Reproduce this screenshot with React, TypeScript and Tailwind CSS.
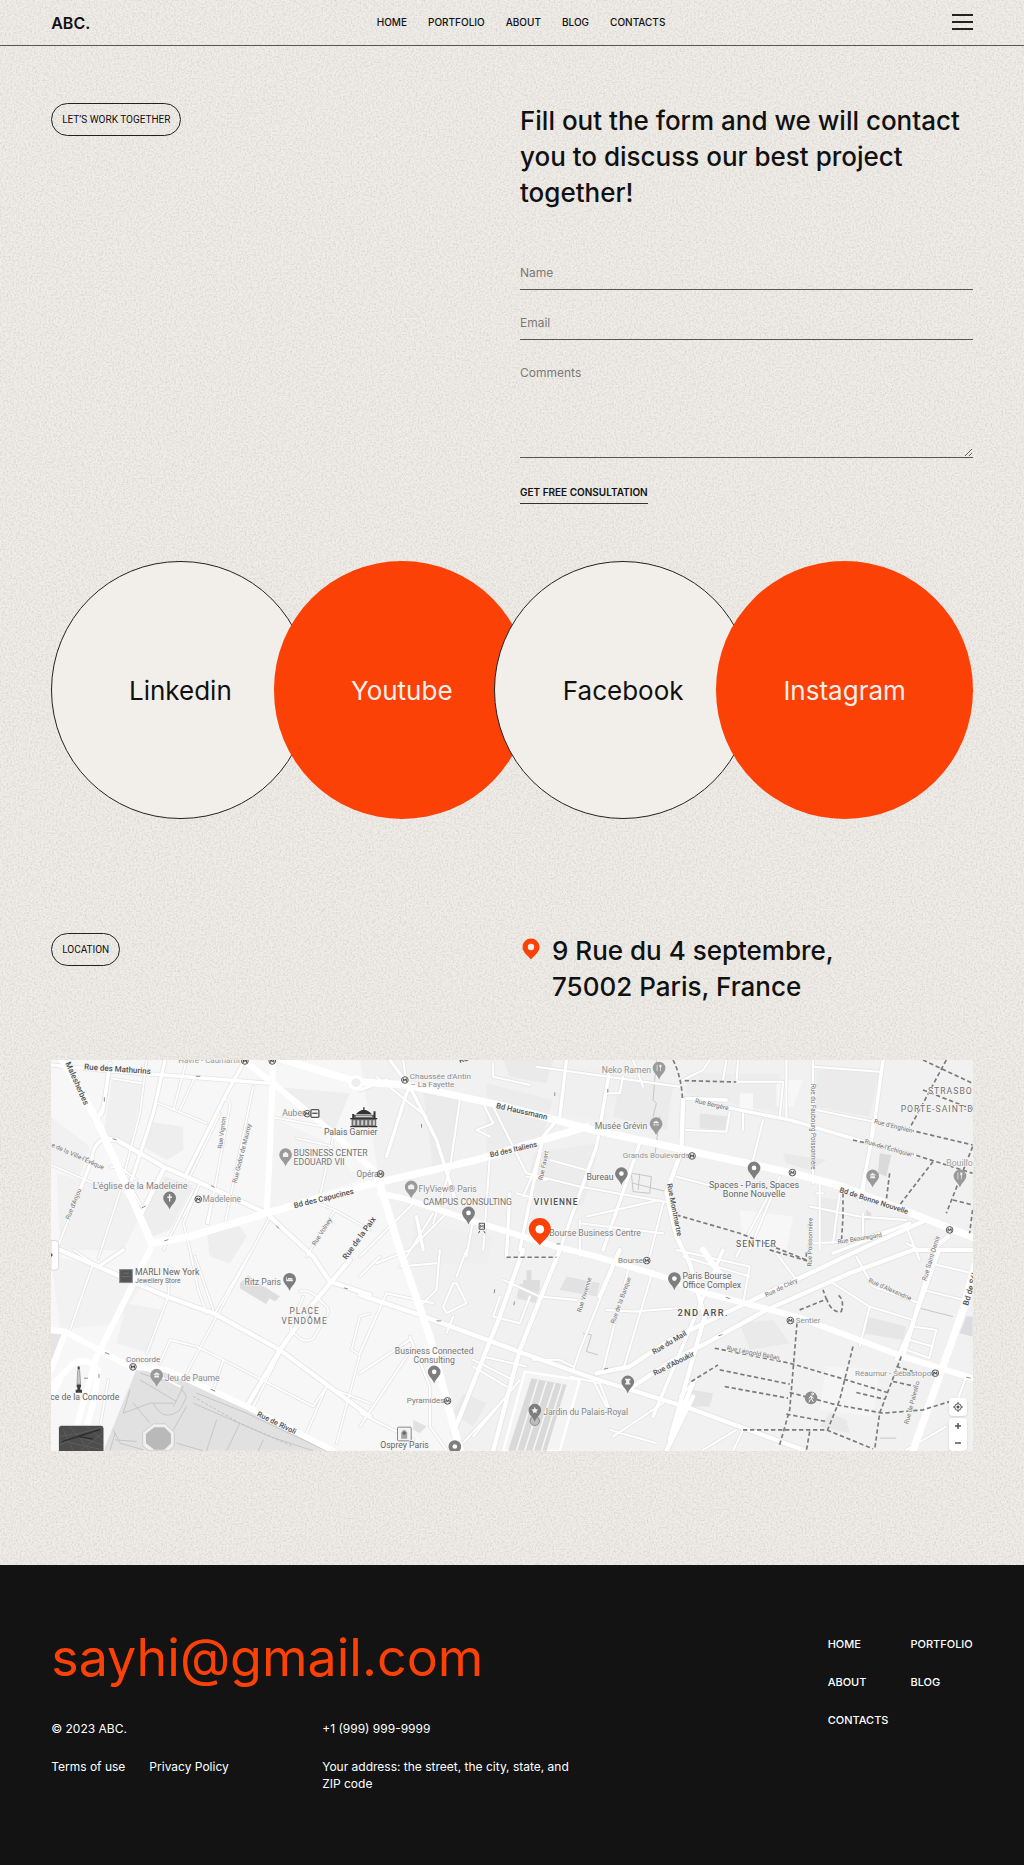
import React from "react";

type Line = { d: string; w: number };
type Label = { x: number; y: number; t: string; s?: number; r?: number; c?: string; a?: "start" | "middle" | "end"; b?: boolean; sp?: number };

const NAV = ["Home", "Portfolio", "About", "Blog", "Contacts"];

const CIRCLES = [
  { name: "Linkedin", filled: false },
  { name: "Youtube", filled: true },
  { name: "Facebook", filled: false },
  { name: "Instagram", filled: true },
];

/* Map drawing, three units to one pixel at full width */

const BLOCKS: { d: string; f: string }[] = [
  { d: "M960 30H2799V1203H1260L1170 860L1020 400Z", f: "#f1f1f1" },
  { d: "M215 90L310 100L270 290L190 255Z", f: "#f0f0f0" },
  { d: "M700 110L930 130L880 250Z", f: "#eeeeee" },
  { d: "M700 205L850 270L960 390L690 480Z", f: "#f3f3f3" },
  { d: "M33 200L150 290L120 380L33 340Z", f: "#f1f1f1" },
  { d: "M50 370L245 420L300 500L250 600H60Z", f: "#f1f1f1" },
  { d: "M330 215L430 230L430 300L380 330L310 290Z", f: "#eeeeee" },
  { d: "M375 380L460 405L390 540L340 560L300 500Z", f: "#eeeeee" },
  { d: "M500 540L600 530L620 560L570 640L510 620Z", f: "#eeeeee" },
  { d: "M33 620L150 640L310 700L230 820L60 840Z", f: "#f2f2f2" },
  { d: "M260 760L370 780L330 910L230 880Z", f: "#f0f0f0" },
  { d: "M1150 120L1260 150L1230 350L1180 360Z", f: "#ebebeb" },
  { d: "M1340 100L1540 150L1500 290L1340 310Z", f: "#ececec" },
  { d: "M1390 30H1540L1520 100L1410 80Z", f: "#eaeaea" },
  { d: "M1740 90L1900 110L1880 240L1720 200Z", f: "#ebebeb" },
  { d: "M1560 40L1740 60L1700 210L1550 190Z", f: "#f0f0f0" },
  { d: "M1480 310L1680 280L1630 470L1460 430Z", f: "#ececec" },
  { d: "M1120 520L1360 560L1340 640L1110 640Z", f: "#efefef" },
  { d: "M2330 60H2520L2490 200L2330 170Z", f: "#ebebeb" },
  { d: "M1940 70H2220L2220 190L1940 130Z", f: "#ededed" },
  { d: "M1980 190L2070 200L2060 240L1980 235Z", f: "#e4e4e4" },
  { d: "M2100 130H2140V180H2100Z", f: "#f8f8f8" },
  { d: "M2230 310L2360 330L2310 360L2240 340Z", f: "#e9e9e9" },
  { d: "M2520 310L2555 315L2540 380L2515 370Z", f: "#dadada" },
  { d: "M2480 480L2495 490V510H2475Z", f: "#dedede" },
  { d: "M2330 440L2400 450L2390 580H2340Z", f: "#ebebeb" },
  { d: "M2100 480L2260 500L2240 600L2110 590Z", f: "#f7f7f7" },
  { d: "M2210 90H2290L2260 170H2210Z", f: "#f7f7f7" },
  { d: "M1580 680L1680 700L1670 740L1560 720Z", f: "#e2e2e2" },
  { d: "M1440 700L1500 710L1490 760L1430 745Z", f: "#e0e0e0" },
  { d: "M1460 660H1475V690H1500V720H1450V690H1460Z", f: "#dddddd" },
  { d: "M2480 800L2600 830L2590 870L2470 850Z", f: "#e6e6e6" },
  { d: "M2100 820L2200 810L2250 880L2130 900Z", f: "#eaeaea" },
  { d: "M1950 1020L2020 1030L2010 1070L1940 1070Z", f: "#e4e4e4" },
  { d: "M2360 950L2520 960L2500 1100L2340 1080Z", f: "#f5f5f5" },
  { d: "M1270 1030L1340 1060L1300 1130L1240 1090Z", f: "#eaeaea" },
  { d: "M1120 1110L1160 1130L1140 1150L1120 1140Z", f: "#e1e1e1" },
  { d: "M2340 1130L2430 1150L2420 1110L2370 1090Z", f: "#e8e8e8" },
  { d: "M2780 800H2799V860L2760 850Z", f: "#dcdce0" },
  { d: "M600 700L625 675L640 690L720 740L705 755L690 745L678 762L600 715Z", f: "#dedede" },
  { d: "M33 850L80 855L60 900L33 930Z", f: "#e4e4e4" },
  { d: "M295 945L385 965L620 1075L865 1203H190Z", f: "#e1e1e1" },
];

const ROADS: Line[] = [
  { w: 5, d: "M205 85L195 160L165 210M320 30L300 190L250 380M440 30L400 180M465 80L420 180M355 160L500 220M215 85L305 100M505 520L540 330L570 170Q570 140 545 150M555 520L640 110M440 400L540 190M500 520L525 410M33 345L160 400L250 410M260 385L310 480M210 350L245 355L290 390M120 420L50 600M245 410L175 625M430 500L480 400L430 520L450 600L475 720L500 790M370 600L460 420M690 200L850 230M770 265L880 290M880 260L835 460L885 480L800 620M885 480L990 540M690 500L610 650L530 800L440 970M33 590L160 640L90 840M160 640L100 600M390 650L385 740L320 910M465 620L520 780M390 870L470 890L550 930L520 1020M390 870L360 940M550 930L820 1070L860 1010L990 1060M860 1010L800 1150M640 1070L720 910M630 610L525 790M990 790L960 800L935 900L960 915L890 1180" },
  { w: 5, d: "M780 725Q800 715 830 740L860 770Q870 780 860 800L820 865Q800 880 780 865L755 845Q750 835 757 820L790 740M205 990L180 1130M300 950L420 1010" },
  { w: 6, d: "M1090 30L1100 100M1260 150L1230 360L1180 520M1330 160L1360 220L1310 240L1350 260M1360 40V80L1470 105M1490 50L1920 110M1700 130L1740 130L1750 80M1360 170L1460 370M1460 380L1520 390M1350 320L1330 600M1430 430L1570 470M1460 370L1620 410L1900 460M1530 330L1640 360M1450 440L1480 370L1500 300M1640 500L1860 450M1620 520L1870 550M1620 510V620M1870 460L1830 620M1180 490L1100 620M1230 480L1110 600L1010 640M1300 510L1280 620M960 620L1130 450M1780 30L1810 110M1010 80L1160 200" },
  { w: 6, d: "M960 680L1020 620M960 910L1040 730L1180 760M1080 650L1190 640M1200 600L1190 720L1140 770M1280 600L1250 680M1250 700L1280 760L1220 790L1210 770L1240 700ZM1390 690L1500 740L1610 750M1380 740L1360 800L1440 820L1470 740M1240 800L1220 850M1110 860L1170 1010V1130L1220 1200M1110 870L960 970M1120 890L960 1130M1300 930L1420 990M1300 950L1400 1010M1330 920L1460 950M960 1090L1120 1170M1440 990L1300 1160M1400 1040L1250 1200M1600 950L1560 930L1480 930M1590 980L1680 1000L1710 1080M1720 1160L1870 1060M1710 1140L1850 1180M1740 600L1620 900L1600 960M1840 660L1750 960M1770 640L1690 960M1910 775L1780 785L1700 780M1660 990L1700 1070M1920 1040L1980 980" },
  { w: 6, d: "M1930 90L1990 60L2010 30M2060 30L2050 90M2095 30L2090 100M2090 95L2230 95M2230 100L2220 200M2320 50L2520 65M2320 30V400M2330 180L2500 215M2170 210L2130 370M1940 240L2060 245L2070 185M2110 240V190M1910 380L2100 430M2220 380L2130 600M2190 430L2090 620M2340 400V600M2400 430L2380 580M2310 470L2460 500L2600 510M2310 580L2440 575L2580 530M2470 490V570M2350 430H2330M2500 210L2470 440M2240 30V200M2600 580L2640 600M2600 530L2640 630M1930 620L2130 680M1910 600L2130 650L2110 760M2210 610L2270 690M2000 690L1960 680M2450 620L2500 710L2640 760M2380 700L2490 770L2460 890M2490 770L2620 810M2650 720L2770 750M2670 640L2799 670M2620 830L2690 840L2670 920M2610 870L2680 890M2600 900L2670 925M2110 1140L2080 1203M2090 1140L1990 1200M2600 1200L2720 1130M2780 980L2750 1060" },
  { w: 10, d: "M2060 150L1940 145M2050 170L2250 210L2490 280L2640 320M2530 30L2500 250L2460 450M33 45L200 62L370 75L690 100M375 30L340 190L275 390M610 40L560 130L440 370M160 205Q190 200 190 170L210 40M205 265Q160 270 155 330L120 420M250 600L175 650M1050 30L1110 110L1100 130L1040 320M1110 110L1190 270L1250 460M1580 30L1560 200L1510 260L1440 600M1710 60L1670 290L1560 600M1410 430L1400 620M1800 280L1690 600M2050 600L1840 1100M2610 520L2380 610M2700 600L2620 820L2570 930M1150 600L1130 500M960 120L1040 90" },
  { w: 13, d: "M190 265L230 270L370 350L450 385L680 490L820 620L870 695L990 735M60 600L380 740L520 790L720 900L990 1100M930 630L820 760L720 900L620 1070M1740 600L1680 740M1450 600L1380 800L1240 1150M1560 600L1440 900L1360 1203M370 360Q310 480 300 500L265 420M960 735L1140 795L1450 910L1660 985L1950 1075L2290 1200M1670 970L1770 950L1890 870L2140 750L2480 590L2660 510M1780 1010L1900 930L2000 880L2180 780L2430 670L2620 600H2799M1930 150L1925 300L1880 430L1910 560L1950 640L1995 800L1890 1170M2725 560L2690 590L2650 720L2590 920M1960 1000L1890 1170M1960 1040L1880 1203" },
  { w: 18, d: "M610 30L700 100L880 250L1000 360L1020 400M700 30L690 300L680 490M330 600L250 760L170 920L110 1130L90 1203M33 840L75 845L270 950L380 960L620 1070L880 1203M75 850L33 960M33 1010L100 940Q150 920 175 965L160 1060L120 1203M33 1040L60 990M1020 430L1090 445L1320 520L1550 590L1670 620L1900 690L1980 725L2270 800L2590 920L2799 985M1990 600L2060 700" },
  { w: 22, d: "M50 0L165 200L265 420L335 580M335 580L450 560L680 490L960 410L1310 330L1640 230M700 20L950 95L1100 105L1380 165L1640 235L1890 290L2260 370L2410 410L2590 480L2820 570M1020 400L1080 600L1170 860L1260 1200M2820 600L2770 780L2620 1203" },
];

const DASHES =
  "M1900 30Q1925 80 1928 145M1935 92L2090 96M1400 622H1550M1910 495L2100 550L2300 630M2410 430V500L2405 580M2550 370L2540 450M2680 335L2580 465M2610 240L2799 285M2610 310L2799 370M2440 270L2610 310M2720 30L2610 235M2650 30L2799 100M2650 120L2799 178M2799 290L2720 490M2740 450L2799 465M2799 480L2790 550M2190 600L2300 632V600M2280 780L2360 748L2350 720M2360 745Q2375 790 2405 785Q2415 750 2395 735M2272 820L2250 1080L2220 1185M2440 890L2400 1050L2360 1150M2585 920L2520 1090L2505 1200M2025 895L2250 940L2420 990L2550 1030M1955 995L2035 945M2040 960L2250 1003M2055 1010L2245 1045M2250 1028L2390 1065L2530 1090L2650 1080L2730 1055M2240 1093L2360 1115M2110 1140H2360L2500 1197M2310 1145L2300 1203M2450 1028L2535 1048M2570 950L2620 965M2560 995L2630 1010";

const PATHS =
  "M300 970L430 1010L400 1070M300 990L410 1055M250 1090L330 1060L400 1060M270 1020L250 1090M280 1060L330 1120M340 1060Q370 1120 420 1080L440 1040L420 1010M220 1140L240 1180L310 1200M225 1170L290 1175M210 1203L225 1150M460 1060L690 1160L820 1203M470 1030L620 1090L860 1203M530 1110L500 1203M600 1120L560 1203M670 1170L655 1203M440 1070L400 1140M410 1180L490 1203M1860 200L1845 320M1775 370L1835 380L1830 430L1780 425ZM1800 370L1795 420M1780 400L1880 425M1850 30L1840 150L1850 160L1840 200M1630 850L1655 855L1640 905L1675 915M2490 775H2500M2640 775L2740 800M2520 1165H2570";

const LABELS: Label[] = [
  { x: 132, y: 58, t: "Rue des Mathurins", s: 24, r: 4, b: true },
  { x: 76, y: 40, t: "Malesherbes", s: 24, r: 66, b: true },
  { x: 415, y: 40, t: "Havre - Caumartin", s: 24, c: "#999999" },
  { x: 33, y: 290, t: "e de la Ville-l'Évêque", s: 19, r: 24 },
  { x: 158, y: 417, t: "L'église de la Madeleine", s: 27, c: "#858585" },
  { x: 88, y: 510, t: "Rue d'Anjou", s: 19, r: -68 },
  { x: 488, y: 456, t: "Madeleine", s: 25, c: "#909090" },
  { x: 546, y: 296, t: "Rue Vignon", s: 19, r: -83 },
  { x: 590, y: 400, t: "Rue Godot de Mauroy", s: 19, r: -76 },
  { x: 727, y: 199, t: "Auber", s: 26, c: "#8c8c8c" },
  { x: 852, y: 255, t: "Palais Garnier", s: 26, c: "#666666" },
  { x: 761, y: 318, t: "BUSINESS CENTER", s: 26, c: "#777777" },
  { x: 761, y: 344, t: "EDOUARD VII", s: 26, c: "#777777" },
  { x: 950, y: 380, t: "Opéra", s: 25, c: "#808080" },
  { x: 764, y: 475, t: "Bd des Capucines", s: 23, r: -14, b: true },
  { x: 826, y: 588, t: "Rue Volney", s: 19, r: -57 },
  { x: 920, y: 630, t: "Rue de la Paix", s: 24, r: -54, b: true },
  { x: 1110, y: 86, t: "Chaussée d'Antin", s: 24, c: "#8c8c8c" },
  { x: 1112, y: 110, t: "– La Fayette", s: 24, c: "#8c8c8c" },
  { x: 1260, y: 40, t: "Rue La", s: 24, r: -18, b: true },
  { x: 1368, y: 174, t: "Bd Haussmann", s: 23, r: 13, b: true },
  { x: 1352, y: 322, t: "Bd des Italiens", s: 22, r: -13, b: true },
  { x: 1136, y: 427, t: "FlyView® Paris", s: 26, c: "#8c8c8c" },
  { x: 1150, y: 464, t: "CAMPUS CONSULTING", s: 26, c: "#777777" },
  { x: 1482, y: 466, t: "VIVIENNE", s: 25, b: true, sp: 3 },
  { x: 1528, y: 558, t: "Bourse Business Centre", s: 26, c: "#808080" },
  { x: 1508, y: 392, t: "Rue Favart", s: 19, r: -78 },
  { x: 1686, y: 70, t: "Neko Ramen", s: 26, c: "#909090" },
  { x: 1665, y: 237, t: "Musée Grévin", s: 26, c: "#777777" },
  { x: 1749, y: 323, t: "Grands Boulevards", s: 24, c: "#949494" },
  { x: 1640, y: 389, t: "Bureau", s: 26, c: "#666666" },
  { x: 1882, y: 402, t: "Rue Montmartre", s: 22, r: 79, b: true },
  { x: 1965, y: 158, t: "Rue Bergère", s: 19, r: 13 },
  { x: 2313, y: 102, t: "Rue du Faubourg Poissonnière", s: 19, r: 90 },
  { x: 2316, y: 650, t: "Rue Poissonnière", s: 19, r: -89 },
  { x: 2143, y: 414, t: "Spaces - Paris, Spaces", s: 27, a: "middle", c: "#666666" },
  { x: 2143, y: 441, t: "Bonne Nouvelle", s: 27, a: "middle", c: "#666666" },
  { x: 2089, y: 590, t: "SENTIER", s: 26, sp: 3, c: "#555555" },
  { x: 2665, y: 132, t: "STRASBOURG", s: 26, sp: 3 },
  { x: 2583, y: 186, t: "PORTE-SAINT-DENIS", s: 26, sp: 3 },
  { x: 2502, y: 220, t: "Rue d'Enghien", s: 19, r: 14 },
  { x: 2474, y: 280, t: "Rue de l'Échiquier", s: 19, r: 16 },
  { x: 2720, y: 348, t: "Bouillon", s: 26, c: "#a0a0a0" },
  { x: 2398, y: 426, t: "Bd de Bonne Nouvelle", s: 22, r: 18, b: true },
  { x: 2395, y: 582, t: "Rue Beauregard", s: 19, r: -9 },
  { x: 2660, y: 694, t: "Rue Saint-Denis", s: 20, r: -73 },
  { x: 2785, y: 768, t: "Bd de Sébastopol", s: 24, r: -73, b: true },
  { x: 285, y: 675, t: "MARLI New York", s: 26, c: "#666666" },
  { x: 286, y: 699, t: "Jewellery Store", s: 20 },
  { x: 614, y: 704, t: "Ritz Paris", s: 26, c: "#777777" },
  { x: 794, y: 793, t: "PLACE", s: 25, a: "middle", sp: 3 },
  { x: 794, y: 823, t: "VENDÔME", s: 25, a: "middle", sp: 3 },
  { x: 258, y: 935, t: "Concorde", s: 24, c: "#808080" },
  { x: 374, y: 993, t: "Jeu de Paume", s: 26, c: "#8c8c8c" },
  { x: 238, y: 1051, t: "Place de la Concorde", s: 26, a: "end", c: "#666666" },
  { x: 650, y: 1098, t: "Rue de Rivoli", s: 22, r: 26, b: true },
  { x: 1183, y: 911, t: "Business Connected", s: 26, a: "middle", c: "#777777" },
  { x: 1183, y: 938, t: "Consulting", s: 26, a: "middle", c: "#777777" },
  { x: 1101, y: 1060, t: "Pyramides", s: 24, c: "#808080" },
  { x: 1021, y: 1196, t: "Osprey Paris", s: 26, c: "#666666" },
  { x: 1510, y: 1096, t: "Jardin du Palais-Royal", s: 26, c: "#858585" },
  { x: 1735, y: 638, t: "Bourse", s: 24, c: "#808080" },
  { x: 1624, y: 788, t: "Rue Vivienne", s: 19, r: -73 },
  { x: 1724, y: 822, t: "Rue de la Banque", s: 19, r: -70 },
  { x: 1928, y: 688, t: "Paris Bourse", s: 26, c: "#666666" },
  { x: 1928, y: 715, t: "Office Complex", s: 26, c: "#666666" },
  { x: 1913, y: 797, t: "2ND ARR.", s: 28, b: true, sp: 4 },
  { x: 1843, y: 914, t: "Rue du Mail", s: 22, r: -31, b: true },
  { x: 1845, y: 978, t: "Rue d'Aboukir", s: 22, r: -27, b: true },
  { x: 2180, y: 742, t: "Rue de Cléry", s: 19, r: -26 },
  { x: 2485, y: 696, t: "Rue d'Alexandrie", s: 19, r: 24 },
  { x: 2268, y: 818, t: "Sentier", s: 24, c: "#909090" },
  { x: 2060, y: 900, t: "Rue Léopold Bellan", s: 19, r: 11 },
  { x: 2446, y: 978, t: "Réaumur - Sébastopol", s: 24, c: "#909090" },
  { x: 2606, y: 1124, t: "Rue de Palestro", s: 19, r: -75 },
];

const PINS: { x: number; y: number; icon: string; light?: boolean }[] = [
  { x: 389, y: 444, icon: "M-2 -11H2V-4H7V0H2V11H-2V0H-7V-4H-2Z" },
  { x: 737, y: 314, icon: "M-8 7V-3L0 -9L8 -3V7Z", light: true },
  { x: 1114, y: 411, icon: "M-9 -5H-4L-2 -8H3L5 -5H9V7H-9Z", light: true },
  { x: 1286, y: 489, icon: "" },
  { x: 1858, y: 54, icon: "M-7 -10H-5V10H-7ZM1 -10H7V-2H5V10H3V-2H1Z", light: true },
  { x: 1849, y: 221, icon: "M-9 -3L0 -9L9 -3V-1H-9ZM-7 1H-4V6H-7ZM4 1H7V6H4ZM-1 1H1V6H-1Z", light: true },
  { x: 1745, y: 371, icon: "" },
  { x: 2143, y: 354, icon: "" },
  { x: 2499, y: 378, icon: "M-9 -3L0 -9L9 -3V-1H-9ZM-7 1H7V7H-7Z", light: true },
  { x: 2761, y: 378, icon: "M-7 -10H-5V10H-7ZM1 -10H7V-2H5V10H3V-2H1Z", light: true },
  { x: 749, y: 688, icon: "M-10 -6H-8V1H10V6H-10ZM-5 -4H8V0H-5Z" },
  { x: 350, y: 976, icon: "M-9 -3L0 -9L9 -3V-1H-9ZM-7 1H7V7H-7Z", light: true },
  { x: 1183, y: 966, icon: "" },
  { x: 1245, y: 1190, icon: "" },
  { x: 1485, y: 1081, icon: "M0 -10L3 -3L10 -2L5 3L6 9L0 6L-6 9L-5 3L-10 -2L-3 -3Z" },
  { x: 1904, y: 686, icon: "" },
  { x: 1764, y: 996, icon: "M-8 -9H8V-5H5V4H8V8H-8V4H-5V-5H-8Z" },
];

const METROS = [
  [615, 33], [697, 33], [475, 448], [802, 191], [1022, 372], [1095, 90], [1957, 318], [2258, 368],
  [2730, 540], [279, 951], [1223, 1053], [1821, 632], [2252, 812], [2687, 970],
];

function MapDrawing() {
  return (
    <svg viewBox="33 30 2766 1173" className="block h-auto w-full" role="img" aria-label="Map of central Paris around the Bourse" fontFamily="Roboto, 'Liberation Sans', sans-serif">
      <rect x="33" y="30" width="2766" height="1173" fill="#f7f7f7" />
      {BLOCKS.map((b) => (
        <path key={b.d} d={b.d} fill={b.f} />
      ))}
      <path d={PATHS} fill="none" stroke="#c6c6c6" strokeWidth="3" />
      <path d="M460 1040L600 1120L760 1190" fill="none" stroke="#bdbdbd" strokeWidth="3" strokeDasharray="8 6" />
      <path d="M340 1122H376L403 1148V1188L388 1203H328L308 1188V1148Z" fill="#f0f0f0" stroke="#cccccc" strokeWidth="3" />
      <path d="M343 1132H373L393 1152V1180L373 1200H343L318 1180V1152Z" fill="#b9b9b9" />

      {/* street casings, then the white surfaces on top */}
      <g fill="none" stroke="#e5e5e5" strokeLinejoin="round" strokeLinecap="round">
        {ROADS.slice(0, 7).map((r) => (
          <path key={r.d} d={r.d} strokeWidth={r.w + 5} />
        ))}
      </g>
      <g fill="none" stroke="#ffffff" strokeLinejoin="round" strokeLinecap="round">
        {ROADS.map((r) => (
          <path key={r.d} d={r.d} strokeWidth={r.w} />
        ))}
      </g>
      <circle cx="948" cy="98" r="18" fill="#eeeeee" stroke="#ffffff" strokeWidth="9" />

      {/* Palais-Royal garden */}
      <path d="M1455 965L1620 990L1560 1203H1390Z" fill="#f4f4f4" stroke="#ffffff" strokeWidth="7" />
      <path d="M1475 985L1580 1005L1520 1203H1405Z" fill="#d9d9d9" />
      <path d="M1495 990L1430 1203M1520 995L1455 1203M1545 1000L1480 1203M1567 1003L1505 1203" stroke="#f5f5f5" strokeWidth="5" />
      <circle cx="1485" cy="1113" r="14" fill="#bcbcbc" stroke="#8a8a8a" strokeWidth="3" />

      <path d={DASHES} fill="none" stroke="#7b7b7b" strokeWidth="5" strokeDasharray="13 8" />

      {/* one-way arrows */}
      <g fill="none" stroke="#8d8d8d" strokeWidth="3">
        <path d="M468 79H481M193 142V155M218 266L230 270M513 407L524 412M305 474L317 468M373 573L385 569M709 527L717 536M1145 222V233M1545 127V138M1704 117V128M912 714L924 717M195 908L208 913M512 1018L526 1024M1190 813H1204M1365 718L1363 730M1424 755L1422 766M1692 958L1705 955M2058 742L2071 746M2036 858L2048 854M1550 582H1562M2780 982L2793 985M132 985H144M177 972V984" />
      </g>

      {/* opera house */}
      <path d="M935 206H1009V230H935ZM941 194H1003V206H941Z" fill="#6e6e6e" />
      <path d="M931 228H1012V232H931ZM931 204H1012V208H931ZM948 193Q972 166 996 193ZM970 172H974V180H970ZM1001 184H1007V204H1001ZM937 192H943V204H937Z" fill="#333333" />
      <path d="M940 211H946V226H940ZM952 211H958V226H952ZM964 211H970V226H964ZM976 211H982V226H976ZM988 211H994V226H988ZM999 211H1005V226H999ZM948 197H996V201H948Z" fill="#cfcfcf" />

      {/* obelisk */}
      <path d="M116 955L119 962L122 1003H111L113 962Z" fill="#c9c9c9" stroke="#8a8a8a" strokeWidth="2" />
      <path d="M110 1004H123V1012H121V1020H126V1029H107V1020H112V1012H110ZM113 950H119V958H113Z" fill="#3e3e3e" />

      <rect x="239" y="659" width="38" height="39" fill="#555555" stroke="#8a8a8a" strokeWidth="3" />
      <path d="M246 680H270M250 670H266" stroke="#6e6e6e" strokeWidth="3" />
      <rect x="813" y="179" width="24" height="23" rx="3" fill="#f5f5f5" stroke="#555555" strokeWidth="4" />
      <path d="M817 190H833" stroke="#555555" strokeWidth="4" />
      <path d="M1318 520H1334V538H1318ZM1320 543L1316 550M1332 543L1336 550" fill="#eeeeee" stroke="#555555" strokeWidth="3" />
      <path d="M1322 534V525L1326 531L1330 525V534" fill="none" stroke="#555555" strokeWidth="2" />
      <rect x="1073" y="1132" width="41" height="41" rx="2" fill="#f4f4f4" stroke="#888888" strokeWidth="3" />
      <path d="M1084 1167V1148Q1093 1132 1102 1148V1167Z" fill="#a2a2a2" />
      <circle cx="1093" cy="1150" r="5" fill="#686868" />
      <circle cx="2314" cy="1044" r="19" fill="#8c8c8c" />
      <path d="M2316 1032A3 3 0 1 1 2316 1033M2314 1038L2308 1046M2314 1038L2316 1048L2321 1056M2312 1048L2308 1057M2315 1040L2322 1045" fill="none" stroke="#ffffff" strokeWidth="3" />

      <g stroke="#f6f6f6" strokeWidth="4" strokeLinejoin="round" style={{ paintOrder: "stroke" }}>
        {LABELS.map((l) => (
          <text
            key={l.t + l.x}
            x={l.x}
            y={l.y}
            fontSize={l.s}
            fontWeight={l.b ? 500 : 400}
            fill={l.c ?? (l.b ? "#505050" : "#717171")}
            textAnchor={l.a ?? "start"}
            letterSpacing={l.sp}
            transform={l.r ? `rotate(${l.r} ${l.x} ${l.y})` : undefined}
          >
            {l.t}
          </text>
        ))}
      </g>

      {METROS.map(([x, y]) => (
        <g key={`${x}-${y}`} transform={`translate(${x} ${y})`}>
          <circle r="10" fill="#eeeeee" stroke="#5a5a5a" strokeWidth="3" />
          <path d="M-5 5L-4 -4L0 2L4 -4L5 5" fill="none" stroke="#444444" strokeWidth="3" />
        </g>
      ))}

      {PINS.map((p) => (
        <g key={`${p.x}-${p.y}`} transform={`translate(${p.x} ${p.y})`}>
          <path d="M0 35C-4 20 -19 14 -19 0A19 19 0 1 1 19 0C19 14 4 20 0 35Z" fill={p.light ? "#9a9a9a" : "#7e7e7e"} />
          {p.icon ? <path d={p.icon} fill="#f2f2f2" /> : <circle r="7" fill="#ffffff" />}
        </g>
      ))}

      {/* satellite preview and side-panel handle */}
      <rect x="55" y="1126" width="137" height="90" rx="10" fill="#4d4d4d" stroke="#f7f7f7" strokeWidth="3" />
      <path d="M60 1160L120 1150L188 1132M60 1185L110 1160L188 1185M90 1130L150 1203M120 1203L188 1150M70 1140L100 1203M140 1130L188 1170M62 1172L188 1200" fill="none" stroke="#5c5c5c" strokeWidth="3" />
      <path d="M65 1176L105 1163L180 1139M115 1160L160 1168" fill="none" stroke="#2f2f2f" strokeWidth="4" />
      <path d="M33 572H46Q56 572 56 582V650Q56 661 46 661H33Z" fill="#ffffff" stroke="#d9d9d9" strokeWidth="3" />
      <path d="M33 609L39 615L33 621Z" fill="#555555" />

      <path d="M1500 586C1490 572 1467 558 1467 537A33 33 0 1 1 1533 537C1533 558 1510 572 1500 586Z" fill="#fc4107" />
      <circle cx="1500" cy="538" r="13" fill="#ffffff" />
    </svg>
  );
}

function Grain() {
  return (
    <svg className="pointer-events-none absolute inset-0 h-full w-full" aria-hidden="true">
      <filter id="grain" x="0" y="0" width="100%" height="100%">
        <feTurbulence type="fractalNoise" baseFrequency="0.55" numOctaves="3" seed="4" />
        <feColorMatrix values="0 0 0 0 0.42  0 0 0 0 0.4  0 0 0 0 0.36  0.7 0 0 0 -0.27" />
      </filter>
      <rect width="100%" height="100%" filter="url(#grain)" />
    </svg>
  );
}

function Tag({ children }: { children: React.ReactNode }) {
  return (
    <span className="inline-flex h-[33px] items-center rounded-full border border-[#222] px-[10px] font-['Roboto','Liberation_Sans',sans-serif] text-[10px] text-[#111] uppercase">
      {children}
    </span>
  );
}

export default function App() {
  const field = "block w-full border-b border-[#555] bg-transparent text-xs leading-[17px] text-[#111] outline-none placeholder:text-[#7c7a77]";
  return (
    <div className="bg-[#131313] font-['Inter','Liberation_Sans',sans-serif] text-[#111]">
      <div className="relative bg-[#f0ede9]">
        <Grain />
        <div className="relative">
          <header className="flex h-[46px] items-center justify-between border-b border-[#555] px-[5%]">
            <a href="#" className="text-base font-semibold">ABC.</a>
            <nav aria-label="Main" className="flex gap-[21px] text-[10px] font-medium uppercase">
              {NAV.map((n) => (
                <a key={n} href={`#${n}`}>{n}</a>
              ))}
            </nav>
            <button type="button" aria-label="Open menu" className="flex w-[21px] flex-col gap-[5px] pb-[2px]">
              <span className="h-[2px] bg-[#222]" />
              <span className="h-[2px] bg-[#222]" />
              <span className="h-[2px] bg-[#222]" />
            </button>
          </header>

          <main className="px-[5%] pb-[57px]">
            <section className="grid grid-cols-2 gap-4 py-[57px]">
              <div>
                <Tag>Let’s work together</Tag>
              </div>
              <div>
                <h1 className="text-[26px] leading-9 font-medium">Fill out the form and we will contact you to discuss our best project together!</h1>
                <form className="mt-[29px]" onSubmit={(e) => e.preventDefault()}>
                  <input aria-label="Name" placeholder="Name" className={`${field} h-[50px] pt-4`} />
                  <input aria-label="Email" type="email" placeholder="Email" className={`${field} h-[50px] pt-4`} />
                  <textarea aria-label="Comments" placeholder="Comments" className={`${field} h-[118px] resize-y pt-6`} />
                  <button type="submit" className="mt-[21px] border-b border-[#333] pt-[5px] pb-[3px] text-[10px] leading-4 font-semibold uppercase">
                    Get free consultation
                  </button>
                </form>
              </div>
            </section>

            <section aria-label="Social networks" className="flex pl-9">
              {CIRCLES.map((c) => (
                <a
                  key={c.name}
                  href={`#${c.name}`}
                  className={`-ml-9 flex aspect-square flex-1 items-center justify-center rounded-full text-[26px] ${
                    c.filled ? "z-0 bg-[#fc4107] text-[#f2efeb]" : "z-0 border border-[#222] bg-[#f2efeb] text-[#111]"
                  }`}
                >
                  {c.name}
                </a>
              ))}
            </section>

            <section className="py-[57px]">
              <div className="grid grid-cols-2 gap-4 pt-[57px]">
                <div>
                  <Tag>Location</Tag>
                </div>
                <div className="flex gap-3 pl-[2px]">
                  <svg viewBox="0 0 18 22" className="mt-[5px] h-[22px] w-[18px] shrink-0" aria-hidden="true">
                    <path d="M9 21.500C6.500 18 .5 14.500 .5 9A8.500 8.500 0 0 1 17.500 9C17.500 14.500 11.500 18 9 21.500Z" fill="#fc4107" />
                    <circle cx="9" cy="9" r="3.200" fill="#f2efeb" />
                  </svg>
                  <h2 className="text-[26px] leading-9 font-medium">
                    9 Rue du 4 septembre,
                    <br />
                    75002 Paris, France
                  </h2>
                </div>
              </div>
              <div className="relative mt-[55px] overflow-hidden">
                <MapDrawing />
                <div className="absolute right-[6px] bottom-0 flex w-[18px] flex-col gap-[2px] text-[#555]">
                  <button type="button" aria-label="Show your location" className="flex h-[18px] items-center justify-center rounded-sm bg-white shadow">
                    <svg viewBox="0 0 10 10" className="h-[10px] w-[10px]" fill="none" stroke="currentColor" aria-hidden="true">
                      <circle cx="5" cy="5" r="3.300" />
                      <circle cx="5" cy="5" r="1.500" fill="currentColor" stroke="none" />
                      <path d="M5 0V2M5 8V10M0 5H2M8 5H10" />
                    </svg>
                  </button>
                  <div className="flex h-[33px] flex-col rounded-sm bg-white shadow">
                    <button type="button" aria-label="Zoom in" className="flex flex-1 items-center justify-center">
                      <svg viewBox="0 0 6 6" className="h-[6px] w-[6px]" stroke="currentColor" strokeWidth="1.500" aria-hidden="true"><path d="M0 3H6M3 0V6" /></svg>
                    </button>
                    <button type="button" aria-label="Zoom out" className="flex flex-1 items-center justify-center">
                      <svg viewBox="0 0 6 6" className="h-[6px] w-[6px]" stroke="currentColor" strokeWidth="1.500" aria-hidden="true"><path d="M0 3H6" /></svg>
                    </button>
                  </div>
                </div>
              </div>
            </section>
          </main>
        </div>
      </div>

      <footer className="flex min-h-[300px] justify-between px-[5%] pt-[63px] pb-[72px] text-white">
        <div>
          <a href="mailto:sayhi@gmail.com" className="text-[52px] leading-[60px] text-[#fc4107]">sayhi@gmail.com</a>
          <div className="mt-8 grid grid-cols-[271px_250px] gap-y-[21px] text-xs leading-[17px]">
            <p>© 2023 ABC.</p>
            <a href="tel:+19999999999">+1 (999) 999-9999</a>
            <div className="flex gap-6">
              <a href="#terms">Terms of use</a>
              <a href="#privacy">Privacy Policy</a>
            </div>
            <address className="not-italic">Your address: the street, the city, state, and ZIP code</address>
          </div>
        </div>
        <nav aria-label="Footer" className="grid grid-cols-[auto_auto] content-start gap-x-[22px] gap-y-[21px] pt-2 text-[11px] leading-[17px] font-medium uppercase">
          {NAV.map((n) => (
            <a key={n} href={`#${n}`}>{n}</a>
          ))}
        </nav>
      </footer>
    </div>
  );
}
